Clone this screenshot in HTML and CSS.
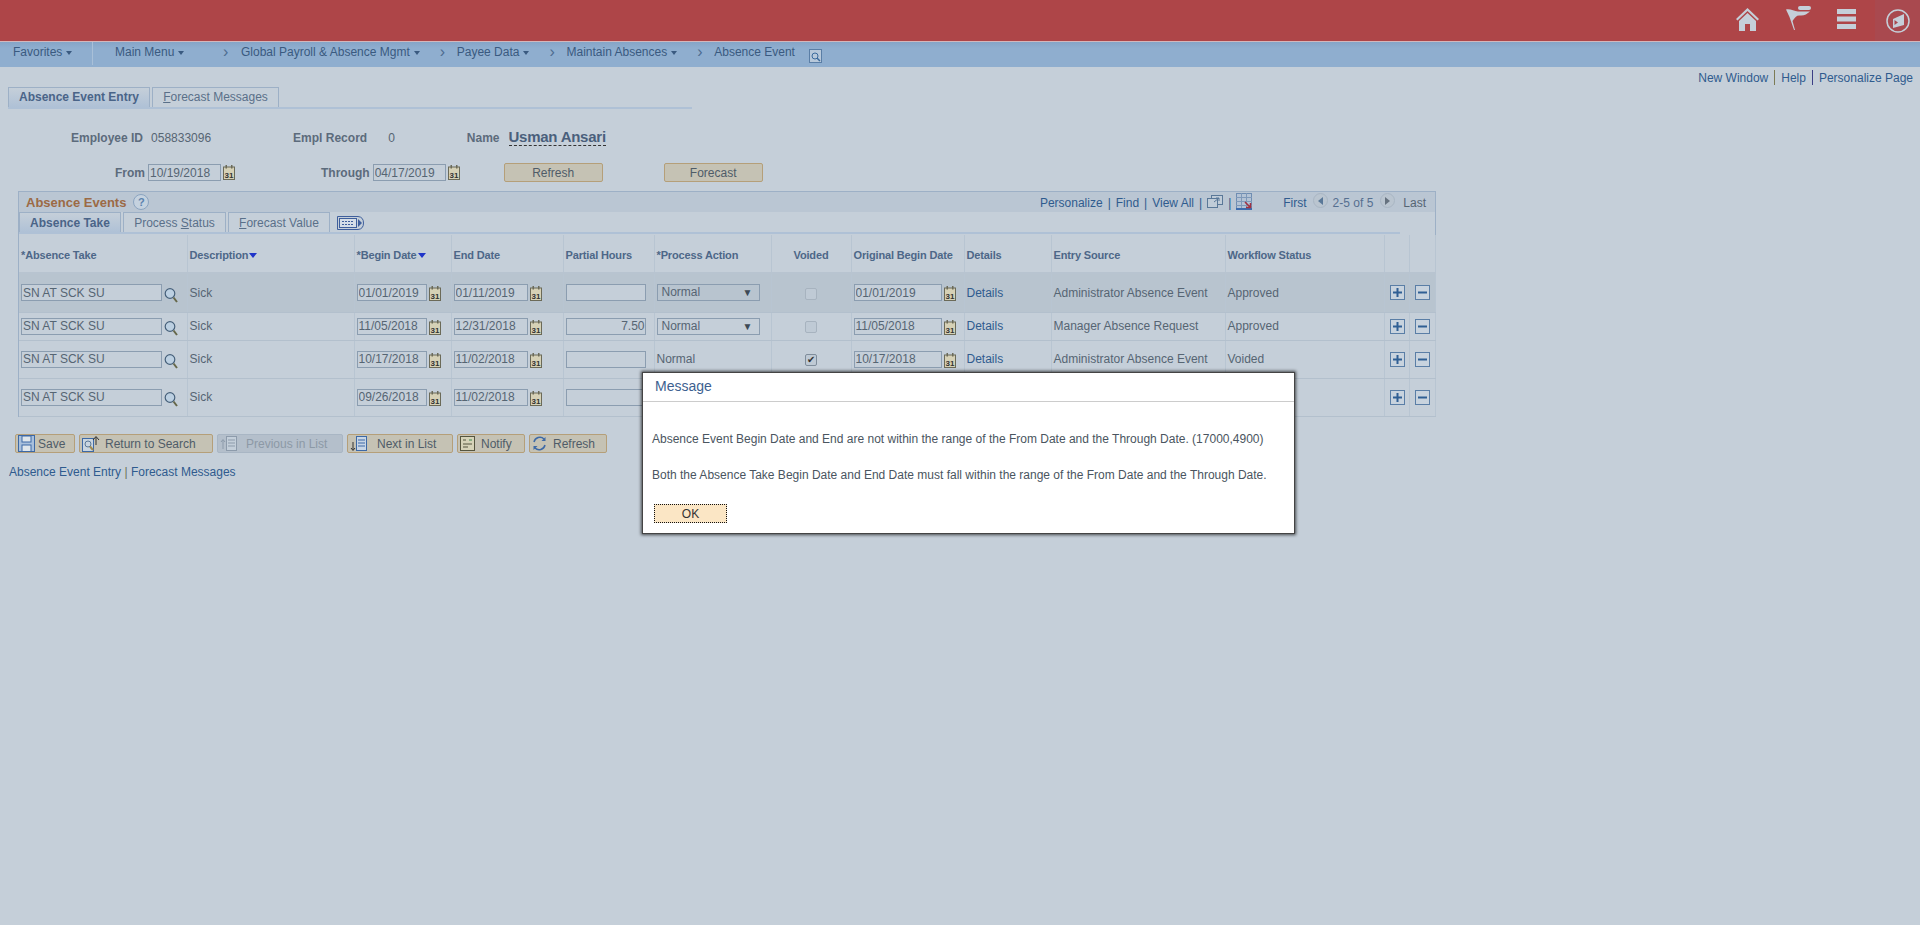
FILE: index.html
```html
<!DOCTYPE html>
<html lang="en">
<head>
    <meta charset="UTF-8">
    <title>Absence Event</title>
    <link rel="stylesheet" href="styles.css">
</head>
<body>
    <svg class="sprites" width="0" height="0">
        <symbol id="i-cal" viewBox="0 0 12 15">
            <rect x="0.5" y="2" width="11" height="12.5" fill="#d6d1b6" stroke="#6b6a58"/>
            <rect x="2.500" y="0" width="1.500" height="3.500" fill="#6b6a58"/>
            <rect x="8" y="0" width="1.500" height="3.500" fill="#6b6a58"/>
            <text x="6" y="12.500" class="cal-num">31</text>
        </symbol>
        <symbol id="i-search" viewBox="0 0 14 16">
            <circle cx="6" cy="6.5" r="4.8" fill="#bcd0e2" stroke="#46607a" stroke-width="1.200"/>
            <path d="M9.500 10.500 L13 15" stroke="#66684a" stroke-width="2"/>
        </symbol>
        <symbol id="i-plus" viewBox="0 0 15 15">
            <rect x="0.5" y="0.5" width="14" height="14" fill="#c8d3de" stroke="#5a7ea6"/>
            <path d="M3 7.5 H12 M7.5 3 V12" stroke="#2f5f94" stroke-width="2"/>
        </symbol>
        <symbol id="i-minus" viewBox="0 0 15 15">
            <rect x="0.5" y="0.5" width="14" height="14" fill="#c8d3de" stroke="#5a7ea6"/>
            <path d="M3 7.5 H12" stroke="#2f5f94" stroke-width="2"/>
        </symbol>
    </svg>

    <header class="topbar">
        <svg class="home" width="23" height="23" viewBox="0 0 23 23"><path d="M11.500 0 L23 11 L21.500 12.500 L11.500 3 L1.500 12.500 L0 11 Z M11.500 5 L20 13 V23 H14 V16 H9 V23 H3 V13 Z" fill="#c5cfd9"/></svg>
        <svg class="flag" width="25" height="24" viewBox="0 0 25 24"><path d="M0 3.500 C4 2.500 8 5 12 5.500 L24 5.500 C21 8 18 10 14 9.500 C11 9 9 11 6.500 15 L9 24 L8 24 L3.500 11 Z" fill="#c5cfd9"/><rect x="12" y="0" width="13" height="4" rx="2" fill="#c5cfd9"/></svg>
        <svg class="menu" width="19" height="20" viewBox="0 0 19 20"><path d="M0 0 H19 V5 H0 Z M0 7.500 H19 V12.500 H0 Z M0 15 H19 V20 H0 Z" fill="#c5cfd9"/></svg>
        <div class="nav-btn">
            <svg width="24" height="24" viewBox="0 0 24 24"><circle cx="12" cy="12" r="11" fill="none" stroke="#c5cfd9" stroke-width="1.500"/><path d="M7 10 L18 5 V16 L7 19 Z" fill="#c5cfd9"/><path d="M8.500 11 L12 13.500 L8.500 16 Z" fill="#a9494f"/></svg>
        </div>
    </header>

    <nav class="menubar">
        <a class="menu-fav">Favorites<i class="caret"></i></a>
        <span class="menu-sep"></span>
        <a class="menu-main">Main Menu<i class="caret"></i></a>
        <span class="chev chev-first">&rsaquo;</span>
        <a>Global Payroll &amp; Absence Mgmt<i class="caret"></i></a>
        <span class="chev">&rsaquo;</span>
        <a>Payee Data<i class="caret"></i></a>
        <span class="chev">&rsaquo;</span>
        <a>Maintain Absences<i class="caret"></i></a>
        <span class="chev">&rsaquo;</span>
        <a>Absence Event</a>
        <svg class="menu-search" width="13" height="14" viewBox="0 0 13 14"><rect x="0.500" y="0.500" width="12" height="13" fill="#b7c8da" stroke="#5a7ea6"/><circle cx="6" cy="7" r="3" fill="none" stroke="#3b6a9c"/><path d="M8 9 L11 12" stroke="#3b6a9c" stroke-width="1.500"/></svg>
    </nav>

    <div class="page-links">
        <a>New Window</a><span class="div div-a"></span><a>Help</a><span class="div div-b"></span><a>Personalize Page</a>
    </div>

    <div class="page-tabs">
        <div class="tab tab-on page-tab-1">Absence Event Entry</div>
        <div class="tab page-tab-2"><u>F</u>orecast Messages</div>
    </div>

    <div class="emp-row">
        <label class="lbl lbl-emp">Employee ID</label><span class="val val-emp">058833096</span>
        <label class="lbl lbl-rec">Empl Record</label><span class="val val-rec">0</span>
        <label class="lbl lbl-name">Name</label><span class="emp-name">Usman Ansari</span>
    </div>

    <div class="date-row">
        <label class="lbl lbl-from">From</label>
        <input class="field f-range" value="10/19/2018">
        <svg class="cal"><use href="#i-cal"/></svg>
        <label class="lbl lbl-through">Through</label>
        <input class="field f-range" value="04/17/2019">
        <svg class="cal"><use href="#i-cal"/></svg>
        <button class="btn btn-plain btn-refresh">Refresh</button>
        <button class="btn btn-plain btn-forecast">Forecast</button>
    </div>

    <section class="grid-box">
        <div class="grid-head">
            <span class="grid-title">Absence Events</span>
            <span class="help-dot">?</span>
            <div class="grid-tools">
                <a>Personalize</a><span class="bar">|</span>
                <a>Find</a><span class="bar">|</span>
                <a>View All</a><span class="bar">|</span>
                <svg class="tool-icon" width="16" height="13" viewBox="0 0 16 13"><rect x="4.500" y="0.500" width="11" height="9" fill="#c0ccd8" stroke="#5a7898"/><rect x="0.500" y="3.500" width="10" height="9" fill="#c0ccd8" stroke="#5a7898"/><path d="M7 7 L12 3 M9 3 H12 V6" stroke="#5a7898" fill="none"/></svg>
                <span class="bar">|</span>
                <svg class="tool-icon" width="16" height="17" viewBox="0 0 16 17"><rect x="0.500" y="0.500" width="15" height="15" fill="#b4c3d5" stroke="#6f8db2"/><path d="M0 4.500 H16 M0 8.500 H16 M0 12.500 H16 M5.500 0 V16 M10.500 0 V16" stroke="#7f99b9"/><rect x="0" y="15" width="16" height="2" fill="#3d6cae"/><path d="M9 9 L14 14 M14.500 10 V14.500 H10" stroke="#a33040" stroke-width="1.500" fill="none"/></svg>
                <span class="first">First</span>
                <span class="round round-prev"></span>
                <span class="range">2-5 of 5</span>
                <span class="round round-next"></span>
                <span class="last">Last</span>
            </div>
        </div>
        <div class="grid-tabs">
            <div class="tab tab-on sub-1">Absence Take</div>
            <div class="tab sub-2">Process <u>S</u>tatus</div>
            <div class="tab sub-3"><u>F</u>orecast Value</div>
            <svg class="show-all" width="27" height="14" viewBox="0 0 27 14"><path d="M0.500 0.500 H21 Q26.500 1 26.500 7 Q26.500 13 21 13.500 H0.500 Z" fill="#c5cfd9" stroke="#3f5f9c"/><rect x="2.500" y="2.500" width="17" height="9" fill="#d5dee8" stroke="#3f5f9c"/><path d="M5 5.500 H17 M5 8.500 H17" stroke="#3f5f9c" stroke-dasharray="2 1"/><path d="M21 3 L25 7 L21 11 Z" fill="#3f5f9c"/></svg>
        </div>
        <div class="grid-rule"></div>

        <table class="grid-table">
            <colgroup>
                <col class="c-take"><col class="c-desc"><col class="c-begin"><col class="c-end"><col class="c-hours">
                <col class="c-action"><col class="c-void"><col class="c-orig"><col class="c-det"><col class="c-src">
                <col class="c-wf"><col class="c-add"><col class="c-del">
            </colgroup>
            <thead>
                <tr>
                    <th>*Absence Take</th>
                    <th>Description<i class="sort"></i></th>
                    <th>*Begin Date<i class="sort"></i></th>
                    <th>End Date</th>
                    <th>Partial Hours</th>
                    <th>*Process Action</th>
                    <th class="t-center">Voided</th>
                    <th>Original Begin Date</th>
                    <th>Details</th>
                    <th>Entry Source</th>
                    <th>Workflow Status</th>
                    <th></th>
                    <th></th>
                </tr>
            </thead>
            <tbody>
                <tr class="row-a row-on">
                    <td><input class="field f-take" value="SN AT SCK SU"><svg class="lens"><use href="#i-search"/></svg></td>
                    <td>Sick</td>
                    <td><input class="field f-begin" value="01/01/2019"><svg class="cal"><use href="#i-cal"/></svg></td>
                    <td><input class="field f-end" value="01/11/2019"><svg class="cal"><use href="#i-cal"/></svg></td>
                    <td><input class="field f-hours"></td>
                    <td><div class="select">Normal<i class="sel-arrow">&#9660;</i></div></td>
                    <td class="t-center"><span class="check"></span></td>
                    <td><input class="field f-orig" value="01/01/2019"><svg class="cal"><use href="#i-cal"/></svg></td>
                    <td><a>Details</a></td>
                    <td>Administrator Absence Event</td>
                    <td>Approved</td>
                    <td><svg class="pm"><use href="#i-plus"/></svg></td>
                    <td><svg class="pm"><use href="#i-minus"/></svg></td>
                </tr>
                <tr class="row-b">
                    <td><input class="field f-take" value="SN AT SCK SU"><svg class="lens"><use href="#i-search"/></svg></td>
                    <td>Sick</td>
                    <td><input class="field f-begin" value="11/05/2018"><svg class="cal"><use href="#i-cal"/></svg></td>
                    <td><input class="field f-end" value="12/31/2018"><svg class="cal"><use href="#i-cal"/></svg></td>
                    <td><input class="field f-hours" value="7.50"></td>
                    <td><div class="select">Normal<i class="sel-arrow">&#9660;</i></div></td>
                    <td class="t-center"><span class="check"></span></td>
                    <td><input class="field f-orig" value="11/05/2018"><svg class="cal"><use href="#i-cal"/></svg></td>
                    <td><a>Details</a></td>
                    <td>Manager Absence Request</td>
                    <td>Approved</td>
                    <td><svg class="pm"><use href="#i-plus"/></svg></td>
                    <td><svg class="pm"><use href="#i-minus"/></svg></td>
                </tr>
                <tr class="row-a">
                    <td><input class="field f-take" value="SN AT SCK SU"><svg class="lens"><use href="#i-search"/></svg></td>
                    <td>Sick</td>
                    <td><input class="field f-begin" value="10/17/2018"><svg class="cal"><use href="#i-cal"/></svg></td>
                    <td><input class="field f-end" value="11/02/2018"><svg class="cal"><use href="#i-cal"/></svg></td>
                    <td><input class="field f-hours"></td>
                    <td>Normal</td>
                    <td class="t-center"><span class="check check-on">&#10004;</span></td>
                    <td><input class="field f-orig" value="10/17/2018"><svg class="cal"><use href="#i-cal"/></svg></td>
                    <td><a>Details</a></td>
                    <td>Administrator Absence Event</td>
                    <td>Voided</td>
                    <td><svg class="pm"><use href="#i-plus"/></svg></td>
                    <td><svg class="pm"><use href="#i-minus"/></svg></td>
                </tr>
                <tr class="row-a">
                    <td><input class="field f-take" value="SN AT SCK SU"><svg class="lens"><use href="#i-search"/></svg></td>
                    <td>Sick</td>
                    <td><input class="field f-begin" value="09/26/2018"><svg class="cal"><use href="#i-cal"/></svg></td>
                    <td><input class="field f-end" value="11/02/2018"><svg class="cal"><use href="#i-cal"/></svg></td>
                    <td><input class="field f-hours"></td>
                    <td></td>
                    <td></td>
                    <td></td>
                    <td></td>
                    <td></td>
                    <td></td>
                    <td><svg class="pm"><use href="#i-plus"/></svg></td>
                    <td><svg class="pm"><use href="#i-minus"/></svg></td>
                </tr>
            </tbody>
        </table>
    </section>

    <div class="toolbar">
        <button class="btn b-save"><svg width="17" height="17" viewBox="0 0 17 17"><rect x="0.500" y="0.500" width="16" height="16" fill="#a9c0dc" stroke="#3d69a6"/><rect x="4" y="1" width="9" height="6" fill="#dfe6ec" stroke="#3d69a6"/><rect x="4" y="10" width="9" height="6.500" fill="#dfe6ec" stroke="#3d69a6"/></svg>Save</button>
        <button class="btn b-return"><svg width="18" height="17" viewBox="0 0 18 17"><rect x="0.500" y="3.500" width="11" height="13" fill="#c9d5e0" stroke="#3d69a6"/><circle cx="6" cy="9" r="3" fill="none" stroke="#5a7898"/><path d="M8 11.500 L11 15" stroke="#a08a4f" stroke-width="2"/><path d="M14 10 V2 M11 5 L14 1.500 L17 5" stroke="#333" fill="none"/></svg>Return to Search</button>
        <button class="btn b-prev" disabled><svg width="18" height="17" viewBox="0 0 18 17"><rect x="6.500" y="1.500" width="10" height="14" fill="#c4cfda" stroke="#8d9bab"/><path d="M8 5 H15 M8 8 H15 M8 11 H15" stroke="#8d9bab"/><path d="M3 14 V5 M1 7 L3 4.500 L5 7" stroke="#8d9bab" fill="none"/></svg>Previous in List</button>
        <button class="btn b-next"><svg width="18" height="17" viewBox="0 0 18 17"><rect x="6.500" y="1.500" width="10" height="14" fill="#c8d6e6" stroke="#3d69a6"/><path d="M8 5 H15 M8 8 H15 M8 11 H15" stroke="#3d69a6"/><path d="M3 7 V15 M1 13 L3 15.500 L5 13" stroke="#333" fill="none"/></svg>Next in List</button>
        <button class="btn b-notify"><svg width="15" height="15" viewBox="0 0 15 15"><rect x="0.500" y="0.500" width="14" height="14" fill="#d6d3b8" stroke="#55553f"/><path d="M3 4 H6 M3 8 H12 M3 11 H8" stroke="#55553f"/><path d="M9 4 H12" stroke="#3c8a4f"/></svg>Notify</button>
        <button class="btn b-refresh"><svg width="15" height="15" viewBox="0 0 15 15"><path d="M2 6 A6 6 0 0 1 12 3 M13 9 A6 6 0 0 1 3 12" stroke="#3d69a6" stroke-width="1.500" fill="none"/><path d="M13.500 1 V5 H9.500 Z M1.500 14 V10 H5.500 Z" fill="#3d69a6"/></svg>Refresh</button>
    </div>

    <div class="foot-links"><a>Absence Event Entry</a> <span class="foot-bar">|</span> <a>Forecast Messages</a></div>

    <div class="modal">
        <div class="modal-title">Message</div>
        <div class="modal-body">
            <p class="msg-1">Absence Event Begin Date and End are not within the range of the From Date and the Through Date. (17000,4900)</p>
            <p class="msg-2">Both the Absence Take Begin Date and End Date must fall within the range of the From Date and the Through Date.</p>
            <button class="btn-ok">OK</button>
        </div>
    </div>
</body>
</html>
```

FILE: styles.css
```css
body {
    margin: 0;
    background-color: #C5CFD9;
    font-family: "Liberation Sans", Arial, sans-serif;
    font-size: 12px;
    color: #566573;
    height: 925px;
    overflow: hidden;
    position: relative;
}

a {
    color: #2F5B8E;
}

.sprites {
    display: none;
}

.cal-num {
    font-family: "Liberation Sans", Arial, sans-serif;
    font-size: 8px;
    font-weight: bold;
    text-anchor: middle;
    fill: #333;
}

/* top bar */
.topbar {
    height: 41px;
    background-color: #AE4548;
    display: flex;
    align-items: flex-start;
    justify-content: flex-end;
    border-bottom: 1px solid #D3B7BC;
}

.home {
    margin: 8px 27px 0 0;
}

.flag {
    margin: 6px 26px 0 0;
}

.menu {
    margin: 9px 19px 0 0;
}

.nav-btn {
    width: 45px;
    height: 41px;
    background-color: #A9494F;
    display: flex;
    align-items: flex-start;
    justify-content: center;
    padding-top: 9px;
    box-sizing: border-box;
}

/* breadcrumb menu */
.menubar {
    height: 25px;
    background-color: #8FAECF;
    background-image: linear-gradient(#85A5C7, #8FAECF 6px);
    display: flex;
    align-items: flex-start;
    padding-left: 13px;
    line-height: 20px;
    font-size: 12px;
}

.menubar a {
    color: #3A5A80;
    white-space: nowrap;
}

.caret {
    display: inline-block;
    border-top: 4px solid #3A5A80;
    border-left: 3.500px solid transparent;
    border-right: 3.500px solid transparent;
    margin-left: 4px;
    vertical-align: 1px;
}

.menu-fav {
    width: 79px;
}

.menu-sep {
    width: 1px;
    height: 23px;
    background-color: #A9C0D8;
    margin-right: 22px;
}

.menu-main {
    width: 108px;
}

.chev {
    color: #4D6C90;
    font-size: 16px;
    width: 17px;
    margin-left: 20px;
    line-height: 19px;
}

.chev-first {
    margin-left: 0;
    width: 18px;
}

.menu-search {
    margin-left: 14px;
    margin-top: 7px;
}

/* page links */
.page-links {
    display: flex;
    justify-content: flex-end;
    align-items: center;
    height: 15px;
    margin-top: 3px;
    padding-right: 7px;
}

.page-links a {
    color: #2F5B8E;
}

.div {
    width: 1px;
    height: 15px;
    margin: 0 6px;
}

.div-a {
    background-color: #7C7B55;
}

.div-b {
    background-color: #3C3F86;
}

/* tabs */
.tab {
    box-sizing: border-box;
    height: 20px;
    line-height: 18px;
    border: 1px solid #9DB0C6;
    border-bottom: none;
    color: #5A7089;
    text-align: center;
    white-space: nowrap;
    background-color: #C5CFD9;
    margin-right: 2px;
}

.tab-on {
    font-weight: bold;
    color: #4A6488;
    background-image: linear-gradient(#C5CFD9, #AFC1D6);
}

.page-tabs {
    display: flex;
    width: 684px;
    margin: 2px 0 0 8px;
    border-bottom: 2px solid #AFC1D6;
}

.page-tab-1 {
    width: 142px;
}

.page-tab-2 {
    width: 127px;
}

/* employee header */
.emp-row {
    display: flex;
    align-items: baseline;
    height: 20px;
    margin-top: 19px;
}

.lbl {
    font-weight: bold;
    color: #5C6B7C;
}

.lbl-emp {
    margin-left: 71px;
}

.val-emp {
    margin-left: 8px;
}

.lbl-rec {
    margin-left: 82px;
}

.val-rec {
    margin-left: 21px;
}

.lbl-name {
    margin-left: 72px;
}

.emp-name {
    margin-left: 9px;
    font-size: 15px;
    font-weight: bold;
    letter-spacing: -0.25px;
    color: #4A5F7C;
    border-bottom: 1px dashed #333;
}

.date-row {
    display: flex;
    align-items: center;
    height: 19px;
    margin-top: 15px;
}

.field {
    box-sizing: border-box;
    height: 17px;
    padding: 0 0 0 1px;
    border: 1px solid #8B9DB0;
    background-color: #C5CFD9;
    color: #566573;
    font-family: "Liberation Sans", Arial, sans-serif;
    font-size: 12px;
    outline: none;
}

.f-range {
    width: 73px;
}

.cal {
    width: 12px;
    height: 15px;
    margin-left: 2px;
    flex: none;
    vertical-align: middle;
}

.lbl-from {
    margin-left: 115px;
    margin-right: 3px;
}

.lbl-through {
    margin-left: 86px;
    margin-right: 3px;
}

.btn {
    box-sizing: border-box;
    height: 19px;
    border: 1px solid #B59F79;
    border-radius: 2px;
    background-color: #C5C2B4;
    color: #4F5C68;
    font-family: "Liberation Sans", Arial, sans-serif;
    font-size: 12px;
    padding: 0;
    display: inline-flex;
    align-items: center;
}

.btn-plain {
    width: 99px;
    justify-content: center;
}

.btn-refresh {
    margin-left: 44px;
}

.btn-forecast {
    margin-left: 61px;
}

/* grid */
.grid-box {
    box-sizing: border-box;
    width: 1418px;
    height: 226px;
    margin: 9px 0 0 18px;
    border: 1px solid #9DB0C6;
    border-bottom: none;
}

.grid-head {
    height: 20px;
    background-color: #BAC6D3;
    display: flex;
    align-items: center;
    padding-left: 7px;
}

.grid-title {
    font-size: 13px;
    font-weight: bold;
    color: #9C6A45;
}

.help-dot {
    box-sizing: border-box;
    width: 16px;
    height: 16px;
    margin-left: 7px;
    border: 1px solid #8BA4C0;
    border-radius: 50%;
    background-color: #C5D2DF;
    color: #5C83AE;
    font-size: 11px;
    font-weight: bold;
    text-align: center;
    line-height: 14px;
}

.grid-tools {
    margin-left: auto;
    display: flex;
    align-items: center;
    padding: 2px 9px 0 0;
}

.bar {
    margin: 0 5px;
    color: #2F5B8E;
}

.tool-icon {
    display: block;
    margin-top: -4px;
}

.first {
    color: #2F5B8E;
    margin-left: 31px;
}

.round {
    box-sizing: border-box;
    width: 15px;
    height: 15px;
    margin: -5px 5px 0 6px;
    border-radius: 50%;
    border: 1px solid #A9B6C4;
    background-color: #BAC5D0;
    display: flex;
    align-items: center;
    justify-content: center;
}

.round-prev::before {
    content: '';
    border-right: 5px solid #5A7898;
    border-top: 4px solid transparent;
    border-bottom: 4px solid transparent;
}

.round-next {
    margin-left: 7px;
    margin-right: 8px;
}

.round-next::before {
    content: '';
    border-left: 5px solid #66727F;
    border-top: 4px solid transparent;
    border-bottom: 4px solid transparent;
}

.range {
    color: #566F90;
}

.last {
    color: #566573;
}

.grid-tabs {
    display: flex;
    align-items: flex-end;
    height: 20px;
}

.grid-tabs .tab {
    line-height: 20px;
}

.sub-1 {
    width: 102px;
    margin-right: 2px;
}

.sub-2 {
    width: 103px;
    margin-right: 2px;
}

.sub-3 {
    width: 102px;
}

.show-all {
    margin-left: 5px;
    margin-bottom: 2px;
}

.grid-rule {
    width: 1381px;
    height: 2px;
    margin-bottom: 1px;
    background-color: #AFC1D6;
}

.grid-table {
    table-layout: fixed;
    border-collapse: collapse;
    width: 1416px;
    font-size: 12px;
}

.c-take { width: 168px; }
.c-desc { width: 167px; }
.c-begin { width: 97px; }
.c-end { width: 112px; }
.c-hours { width: 91px; }
.c-action { width: 117px; }
.c-void { width: 80px; }
.c-orig { width: 113px; }
.c-det { width: 87px; }
.c-src { width: 174px; }
.c-wf { width: 159px; }
.c-add { width: 25px; }
.c-del { width: 26px; }

.grid-table th {
    height: 38px;
    padding: 2px 0 0 2px;
    font-size: 11px;
    font-weight: bold;
    letter-spacing: -0.15px;
    text-align: left;
    color: #4D6788;
    border-right: 1px solid #B8C5D2;
    border-bottom: 2px solid #B8C4D0;
    box-sizing: border-box;
    white-space: nowrap;
}

.grid-table th.t-center,
.grid-table td.t-center {
    text-align: center;
    padding-left: 0;
}

.sort {
    display: inline-block;
    border-top: 5px solid #2035C9;
    border-left: 4px solid transparent;
    border-right: 4px solid transparent;
    margin-left: 1px;
    vertical-align: 1px;
}

.grid-table td {
    padding: 0 0 0 2px;
    box-sizing: border-box;
    white-space: nowrap;
    border-right: 1px solid #B8C5D2;
    border-bottom: 1px solid #B3C0CD;
}

.row-a {
    height: 38px;
}

.row-b {
    height: 28px;
}

.grid-table .row-on {
    height: 39px;
}

.row-on td {
    background-color: #B8C4CF;
}

.grid-table td a {
    color: #2F5B8E;
}

.grid-table td .cal {
    margin-top: 2px;
}

.f-take {
    width: 141px;
    vertical-align: middle;
}

.lens {
    width: 14px;
    height: 16px;
    margin: 4px 0 0 2px;
    vertical-align: middle;
}

.f-begin {
    width: 70px;
    vertical-align: middle;
}

.f-end {
    width: 74px;
    vertical-align: middle;
}

.f-hours {
    width: 80px;
    text-align: right;
    padding-right: 0;
    vertical-align: middle;
}

.f-orig {
    width: 88px;
    vertical-align: middle;
}

.select {
    box-sizing: border-box;
    width: 103px;
    height: 17px;
    line-height: 15px;
    padding-left: 4px;
    border: 1px solid #8B9DB0;
    display: flex;
    justify-content: space-between;
}

.sel-arrow {
    font-style: normal;
    font-size: 10px;
    margin-right: 6px;
    color: #3E4A56;
}

.check {
    display: inline-block;
    box-sizing: border-box;
    width: 12px;
    height: 12px;
    border: 1px solid #A7B3BF;
    border-radius: 2px;
    background-color: #BFCAD5;
    vertical-align: middle;
}

.check-on {
    border-color: #7F8D9B;
    font-size: 10px;
    line-height: 10px;
    color: #333;
    text-align: center;
}

.pm {
    width: 15px;
    height: 15px;
    margin-left: 3px;
    vertical-align: middle;
}

/* bottom buttons */
.toolbar {
    display: flex;
    gap: 4px;
    margin: 17px 0 0 15px;
}

.toolbar .btn {
    padding-left: 2px;
}

.toolbar svg {
    flex: none;
}

.b-save {
    width: 60px;
}

.b-save svg {
    margin-right: 3px;
}

.b-return {
    width: 134px;
}

.b-return svg {
    margin-right: 5px;
}

.b-prev {
    width: 126px;
}

.b-prev svg {
    margin-right: 8px;
}

.toolbar .b-prev {
    background-color: #B4BFCB;
    border-color: #A9B6C4;
    color: #8C99A6;
}

.b-next {
    width: 106px;
}

.b-next svg {
    margin-right: 9px;
}

.b-notify {
    width: 68px;
}

.b-notify svg {
    margin-right: 6px;
}

.b-refresh {
    width: 78px;
}

.b-refresh svg {
    margin-right: 6px;
}

.foot-links {
    margin: 12px 0 0 9px;
}

.foot-bar {
    color: #6C7259;
}

/* message dialog */
.modal {
    position: absolute;
    left: 642px;
    top: 372px;
    width: 653px;
    height: 162px;
    box-sizing: border-box;
    background-color: #FFFFFF;
    border: 1px solid #444;
    box-shadow: 0 0 3px 1px rgba(0, 0, 0, 0.65);
}

.modal-title {
    height: 28px;
    line-height: 27px;
    padding-left: 12px;
    font-size: 14px;
    color: #3D5F90;
    border-bottom: 1px solid #CCCCCC;
}

.modal-body {
    padding: 0 0 0 9px;
}

.modal-body p {
    margin: 0;
    color: #4A5560;
    font-size: 12px;
    line-height: 14px;
}

.msg-1 {
    padding-top: 30px;
}

.modal-body .msg-2 {
    margin-top: 22px;
}

.btn-ok {
    display: block;
    box-sizing: border-box;
    width: 73px;
    height: 19px;
    margin: 22px 0 0 2px;
    padding: 0;
    border: 1px dotted #111;
    background-color: #FBE6C5;
    color: #333;
    font-family: "Liberation Sans", Arial, sans-serif;
    font-size: 12px;
}
```
